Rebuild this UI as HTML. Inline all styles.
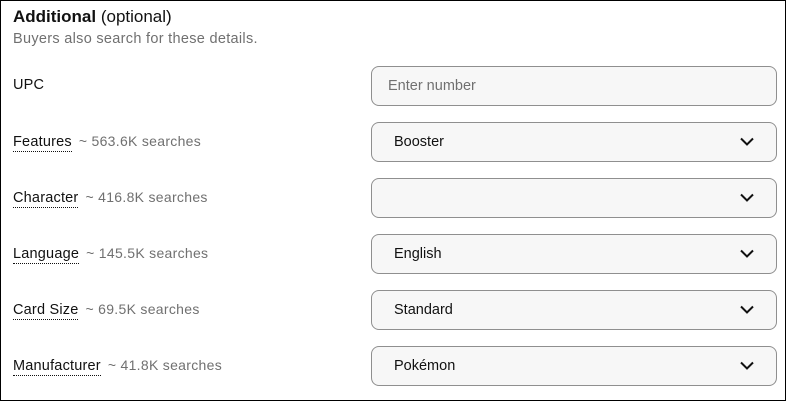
<!DOCTYPE html>
<html><head><style>
body{margin:0;width:786px;height:401px;overflow:hidden;background:#fff;font-family:"Liberation Sans",sans-serif;}
.frame{position:absolute;left:0;top:0;width:784px;height:399px;border:1px solid #000;}
.t{position:absolute;left:13px;top:7px;font-size:17px;color:#111;}
.t b{font-weight:bold}
.s{position:absolute;left:13px;top:31px;font-size:14.5px;color:#707070;letter-spacing:0.3px}
.lab{position:absolute;left:13px;font-size:14.5px;color:#111;letter-spacing:0.2px}
.lab u{text-decoration:none;border-bottom:1px dotted #111;padding-bottom:1px}
.lab span{color:#707070;font-size:14px;margin-left:7px;letter-spacing:0.3px}
.box{position:absolute;left:371px;width:404px;height:38px;border:1px solid #8f8f8f;border-radius:8px;background:#f7f7f7;font-size:14.5px;color:#111;line-height:38px;box-sizing:content-box}
.box .v{position:absolute;left:22px}
.box svg{position:absolute;right:22px;top:14px}
</style></head><body>
<div class="frame"></div>
<div class="t"><b>Additional</b> (optional)</div>
<div class="s">Buyers also search for these details.</div>

<div class="lab" style="top:77px">UPC</div>
<div class="box" style="top:66px"><span class="v" style="left:16px;color:#707070">Enter number</span></div>

<div class="lab" style="top:133px"><u>Features</u><span>~ 563.6K searches</span></div>
<div class="box" style="top:122px"><span class="v">Booster</span><svg width="14" height="9" viewBox="0 0 14 9"><path d="M1 1.5l6 6 6-6" fill="none" stroke="#111" stroke-width="2"/></svg></div>

<div class="lab" style="top:189px"><u>Character</u><span>~ 416.8K searches</span></div>
<div class="box" style="top:178px"><span class="v"></span><svg width="14" height="9" viewBox="0 0 14 9"><path d="M1 1.5l6 6 6-6" fill="none" stroke="#111" stroke-width="2"/></svg></div>

<div class="lab" style="top:245px"><u>Language</u><span>~ 145.5K searches</span></div>
<div class="box" style="top:234px"><span class="v">English</span><svg width="14" height="9" viewBox="0 0 14 9"><path d="M1 1.5l6 6 6-6" fill="none" stroke="#111" stroke-width="2"/></svg></div>

<div class="lab" style="top:301px"><u>Card Size</u><span>~ 69.5K searches</span></div>
<div class="box" style="top:290px"><span class="v">Standard</span><svg width="14" height="9" viewBox="0 0 14 9"><path d="M1 1.5l6 6 6-6" fill="none" stroke="#111" stroke-width="2"/></svg></div>

<div class="lab" style="top:357px"><u>Manufacturer</u><span>~ 41.8K searches</span></div>
<div class="box" style="top:346px"><span class="v">Pokémon</span><svg width="14" height="9" viewBox="0 0 14 9"><path d="M1 1.5l6 6 6-6" fill="none" stroke="#111" stroke-width="2"/></svg></div>
</body></html>
